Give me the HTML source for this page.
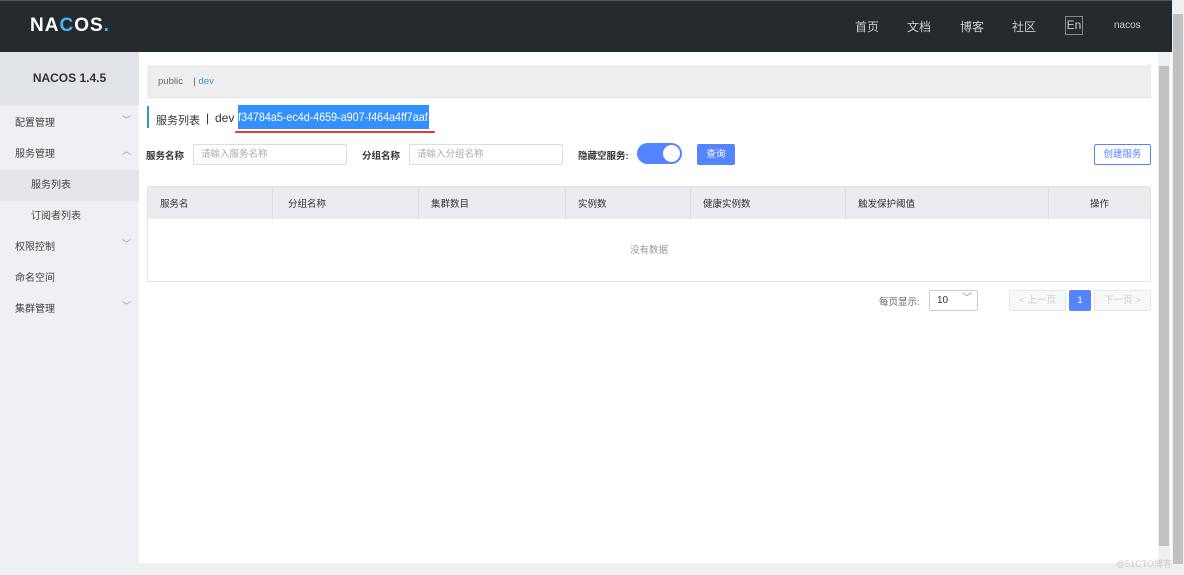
<!DOCTYPE html>
<html><head><meta charset="utf-8"><style>
*{box-sizing:border-box;margin:0;padding:0}
body{width:1184px;height:575px;overflow:hidden;position:relative;background:#fff;font-family:"Liberation Sans","Noto Sans CJK SC",sans-serif;font-size:10px;color:#333}
.top{position:absolute;left:0;top:0;width:1172px;height:52px;background:#252a2f;border-top:1px solid #555}
.logo{position:absolute;left:30px;top:14px;color:#fff;font-size:19px;font-weight:bold;letter-spacing:1px}
.nav{position:absolute;top:17px;color:#ccc;font-size:12px}
.side{position:absolute;left:0;top:52px;width:139px;height:523px;background:#eef0f3}
.side .h{height:53px;background:#e0e3e7;text-align:center;line-height:53px;font-weight:bold;font-size:12px;color:#333}
.mi{height:31px;line-height:31px;padding-left:15px;font-size:10px;color:#444;position:relative}
.mi .a{position:absolute;right:8px;top:-3px;color:#999;font-size:9px}
.sub{padding-left:31px}
.abs{position:absolute;white-space:nowrap}
.inp{position:absolute;height:21px;border:1px solid #ddd;border-radius:2px;color:#aaa;font-size:9.5px;line-height:19px;padding-left:7px}
</style></head><body>
<div class="top">
 <div class="logo">NA<span style="color:#4bb4f0">C</span>OS<span style="color:#4bb4f0">.</span></div>
 <div class="nav" style="left:855px">首页</div>
 <div class="nav" style="left:907px">文档</div>
 <div class="nav" style="left:960px">博客</div>
 <div class="nav" style="left:1012px">社区</div>
 <div class="abs" style="left:1065px;top:15px;width:18px;height:19px;border:1px solid #888;color:#ccc;font-size:12px;text-align:center;line-height:17px">En</div>
 <div class="nav" style="left:1114px;top:19px;font-size:10px">nacos</div>
</div>
<div class="abs" style="left:1172px;top:0;width:12px;height:575px;background:#f0f0f0"><div style="margin:14px 1px 0;height:550px;background:#c1c1c1"></div></div>
<div class="side">
 <div class="h">NACOS 1.4.5</div>
 <div style="height:3px"></div>
 <div class="mi">配置管理<span class="a">﹀</span></div>
 <div class="mi">服务管理<span class="a">︿</span></div>
 <div class="mi sub" style="background:#e4e6ea">服务列表</div>
 <div class="mi sub">订阅者列表</div>
 <div class="mi">权限控制<span class="a">﹀</span></div>
 <div class="mi">命名空间</div>
 <div class="mi">集群管理<span class="a">﹀</span></div>
</div>
<div class="abs" style="left:1158px;top:52px;width:12px;height:511px;background:#f0f0f0"><div style="margin:14px 1px 0;height:480px;background:#c1c1c1"></div></div>
<div class="abs" style="left:139px;top:563px;width:1033px;height:12px;background:#f0f0f0"></div>
<div class="abs" style="left:147px;top:65px;width:1004px;height:33px;background:#eee;border-bottom:1px solid #e0e0e0;line-height:33px;padding-left:11px;color:#666;font-size:9.5px">public &nbsp;&nbsp;&nbsp;| <span style="color:#39c">dev</span></div>
<div class="abs" style="left:147px;top:106px;width:2px;height:22px;background:#39c"></div>
<div class="abs" style="left:156px;top:112px;font-size:11px;color:#333">服务列表</div>
<div class="abs" style="left:206px;top:111px;font-size:12px;color:#333">|</div>
<div class="abs" style="left:215px;top:111px;font-size:12px;color:#333">dev</div>
<div class="abs" style="left:238px;top:105px;width:191px;height:24px;background:#3390ff;overflow:hidden"><span style="display:inline-block;color:#fff;font-size:12px;line-height:24px;transform:scaleX(0.895);transform-origin:0 0">f34784a5-ec4d-4659-a907-f464a4ff7aaf</span></div>
<div class="abs" style="left:235px;top:131px;width:200px;height:2px;background:#e33;border-radius:1px"></div>
<div class="abs" style="left:146px;top:148px;font-weight:bold;font-size:9.5px">服务名称</div>
<div class="inp" style="left:193px;top:144px;width:154px">请输入服务名称</div>
<div class="abs" style="left:362px;top:148px;font-weight:bold;font-size:9.5px">分组名称</div>
<div class="inp" style="left:409px;top:144px;width:154px">请输入分组名称</div>
<div class="abs" style="left:578px;top:148px;font-weight:bold;font-size:9.5px">隐藏空服务:</div>
<div class="abs" style="left:637px;top:143px;width:45px;height:21px;border-radius:11px;background:#5584ff"><div style="position:absolute;right:2px;top:2px;width:17px;height:17px;border-radius:50%;background:#fff"></div></div>
<div class="abs" style="left:697px;top:144px;width:38px;height:21px;background:#5584ff;border-radius:2px;color:#fff;text-align:center;line-height:21px;font-size:9.5px">查询</div>
<div class="abs" style="left:1094px;top:144px;width:57px;height:21px;border:1px solid #5584ff;border-radius:2px;color:#5584ff;text-align:center;line-height:19px;font-size:9.5px">创建服务</div>
<div class="abs" style="left:147px;top:186px;width:1004px;height:96px;border:1px solid #e4e4e4">
 <div style="height:32px;background:#ebecf0;position:relative;font-size:9.5px;color:#333">
  <span class="abs" style="left:12px;top:9px">服务名</span>
  <span class="abs" style="left:124px;top:0;height:32px;border-left:1px solid #ddd"></span>
  <span class="abs" style="left:140px;top:9px">分组名称</span>
  <span class="abs" style="left:270px;top:0;height:32px;border-left:1px solid #ddd"></span>
  <span class="abs" style="left:283px;top:9px">集群数目</span>
  <span class="abs" style="left:417px;top:0;height:32px;border-left:1px solid #ddd"></span>
  <span class="abs" style="left:430px;top:9px">实例数</span>
  <span class="abs" style="left:542px;top:0;height:32px;border-left:1px solid #ddd"></span>
  <span class="abs" style="left:555px;top:9px">健康实例数</span>
  <span class="abs" style="left:697px;top:0;height:32px;border-left:1px solid #ddd"></span>
  <span class="abs" style="left:710px;top:9px">触发保护阈值</span>
  <span class="abs" style="left:900px;top:0;height:32px;border-left:1px solid #ddd"></span>
  <span class="abs" style="left:942px;top:9px">操作</span>
 </div>
 <div style="text-align:center;color:#999;font-size:9.5px;margin-top:23px">没有数据</div>
</div>
<div class="abs" style="left:879px;top:294px;color:#666;font-size:9.5px">每页显示:</div>
<div class="abs" style="left:929px;top:290px;width:49px;height:21px;border:1px solid #ccc;border-radius:2px;font-size:10px;line-height:19px;padding-left:7px">10<span style="position:absolute;right:5px;top:-2px;color:#888">﹀</span></div>
<div class="abs" style="left:1009px;top:290px;width:57px;height:21px;border:1px solid #e6e6e6;background:#f7f8fa;border-radius:2px;color:#ccc;text-align:center;line-height:19px;font-size:9.5px">&lt; 上一页</div>
<div class="abs" style="left:1069px;top:290px;width:22px;height:21px;background:#5584ff;border-radius:2px;color:#fff;text-align:center;line-height:21px;font-size:9.5px">1</div>
<div class="abs" style="left:1094px;top:290px;width:57px;height:21px;border:1px solid #e6e6e6;background:#f7f8fa;border-radius:2px;color:#ccc;text-align:center;line-height:19px;font-size:9.5px">下一页 &gt;</div>
<div class="abs" style="left:1116px;top:557px;color:#ccc;font-size:9px">@51CTO博客</div>
</body></html>
